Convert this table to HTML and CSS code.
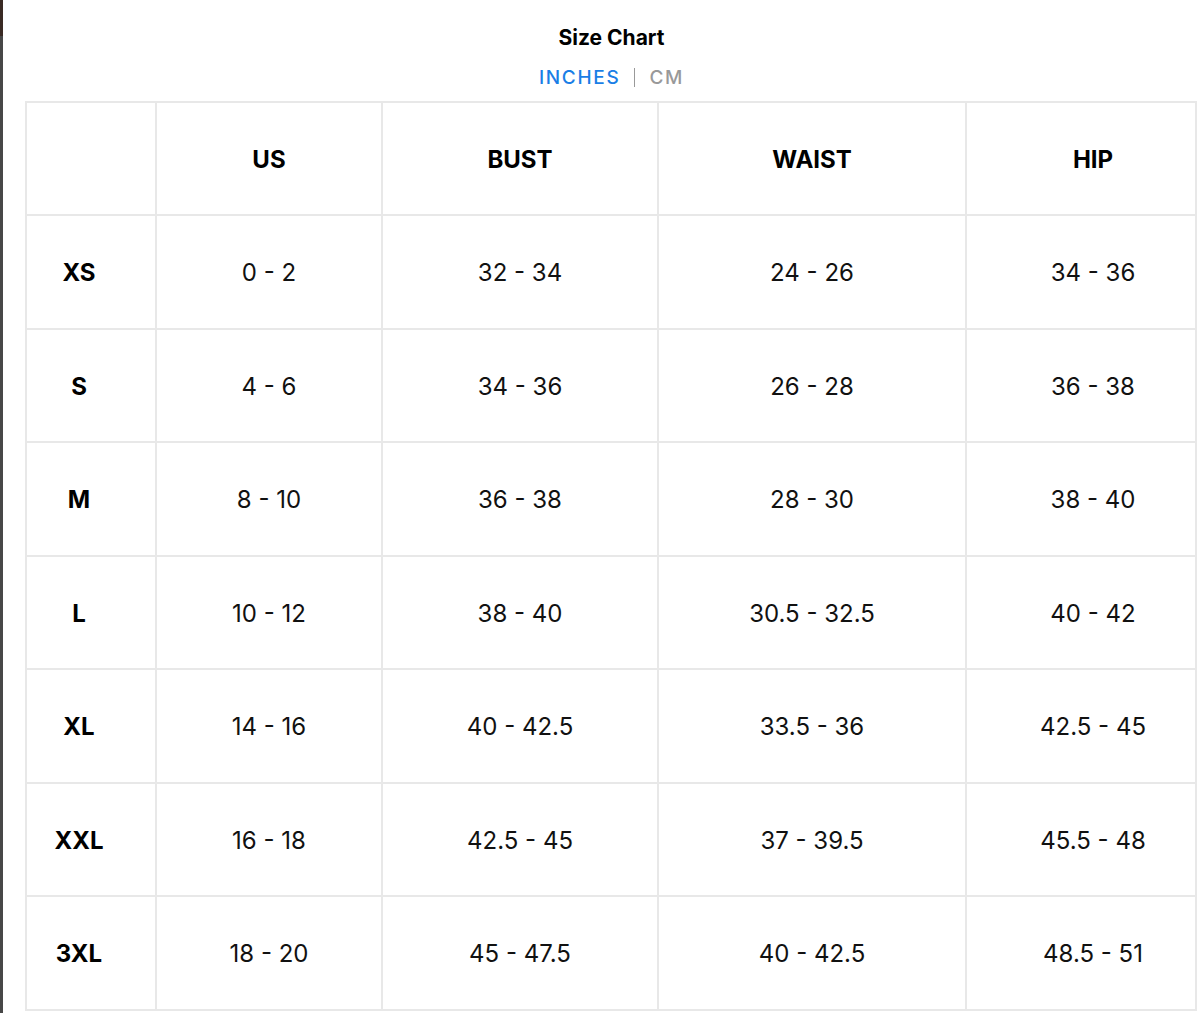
FILE: index.html
```html
<!DOCTYPE html>
<html lang="en">
<head>
<meta charset="utf-8">
<title>Size Chart</title>
<link rel="stylesheet" href="styles.css">
</head>
<body>
<div class="edge"></div>
<main class="chart">
  <h1 class="title">Size Chart</h1>
  <div class="units">
    <span class="unit active">INCHES</span>
    <span class="sep"></span>
    <span class="unit">CM</span>
  </div>
  <table class="sizes">
    <colgroup>
      <col class="c-size"><col class="c-us"><col class="c-bust"><col class="c-waist"><col class="c-hip">
    </colgroup>
    <thead>
      <tr><th class="first"></th><th>US</th><th>BUST</th><th>WAIST</th><th class="last">HIP</th></tr>
    </thead>
    <tbody>
      <tr><th class="first">XS</th><td>0 - 2</td><td>32 - 34</td><td>24 - 26</td><td class="last">34 - 36</td></tr>
      <tr><th class="first">S</th><td>4 - 6</td><td>34 - 36</td><td>26 - 28</td><td class="last">36 - 38</td></tr>
      <tr><th class="first">M</th><td>8 - 10</td><td>36 - 38</td><td>28 - 30</td><td class="last">38 - 40</td></tr>
      <tr><th class="first">L</th><td>10 - 12</td><td>38 - 40</td><td>30.5 - 32.5</td><td class="last">40 - 42</td></tr>
      <tr><th class="first">XL</th><td>14 - 16</td><td>40 - 42.5</td><td>33.5 - 36</td><td class="last">42.5 - 45</td></tr>
      <tr><th class="first">XXL</th><td>16 - 18</td><td>42.5 - 45</td><td>37 - 39.5</td><td class="last">45.5 - 48</td></tr>
      <tr><th class="first">3XL</th><td>18 - 20</td><td>45 - 47.5</td><td>40 - 42.5</td><td class="last">48.5 - 51</td></tr>
    </tbody>
  </table>
</main>
</body>
</html>
```

FILE: styles.css
```css
html, body {
  margin: 0;
  padding: 0;
  background: #fff;
}
body {
  display: flex;
  min-height: 1013px;
  font-family: Inter, "Noto Sans", "Liberation Sans", sans-serif;
  color: #000;
}
.edge {
  flex: 0 0 3px;
  background: linear-gradient(#3a2a24 0 36px, #474747 36px);
}
.chart {
  flex: 1;
  padding: 0 2px 0 22px;
  display: flex;
  flex-direction: column;
  align-items: stretch;
}
.title {
  margin: 25px 0 0;
  text-align: center;
  font-size: 21px;
  font-weight: 700;
  line-height: 26px;
}
.units {
  display: flex;
  justify-content: center;
  align-items: center;
  gap: 14px;
  margin-top: 13px;
  height: 26px;
}
.unit {
  font-size: 19px;
  font-weight: 500;
  letter-spacing: 1.7px;
  color: #999;
}
.unit.active {
  color: #1a7ee6;
}
.sep {
  width: 1px;
  height: 19px;
  background: #999;
}
.sizes {
  margin-top: 11px;
  width: 1170px;
  border-collapse: collapse;
  table-layout: fixed;
  border: 2px solid #e8e8e8;
}
.c-size { width: 130px; }
.c-us { width: 226px; }
.c-bust { width: 276px; }
.c-waist { width: 308px; }
.c-hip { width: 230px; }
.sizes th, .sizes td {
  border: 2px solid #e8e8e8;
  height: 108.5px;
  padding: 3px 0 0;
  text-align: center;
  vertical-align: middle;
  font-size: 24px;
  line-height: 28px;
}
.sizes th {
  font-weight: 700;
}
.sizes td {
  font-weight: 400;
  color: #111;
}
.sizes thead th {
  height: 108px;
}
.sizes .first {
  padding-right: 24px;
}
.sizes .last {
  padding-left: 24px;
}
```
